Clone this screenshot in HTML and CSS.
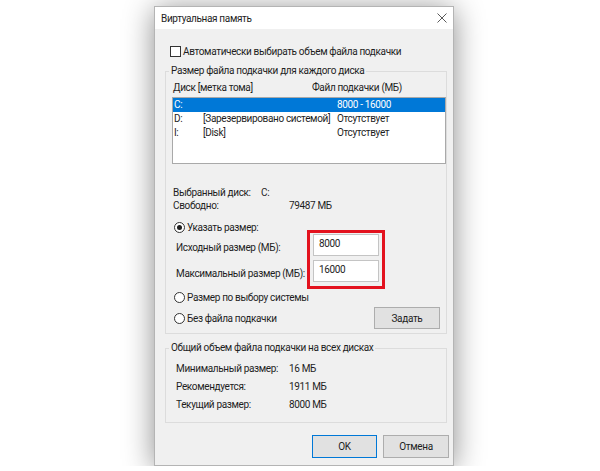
FILE: index.html
```html
<!DOCTYPE html>
<html lang="ru">
<head>
    <meta charset="UTF-8">
    <title>Виртуальная память</title>
    <link rel="stylesheet" href="styles.css">
</head>
<body>

<div class="dialog">
    <div class="titlebar">
        <span class="title">Виртуальная память</span>
        <svg class="close" width="10" height="10" viewBox="0 0 10 10">
            <path d="M0.5 0.5 L9.5 9.5 M9.5 0.5 L0.5 9.5" stroke="#5a5a5a" stroke-width="1" fill="none"/>
        </svg>
    </div>

    <div class="content">
        <div class="check-row">
            <span class="checkbox"></span>
            <span>Автоматически выбирать объем файла подкачки</span>
        </div>

        <fieldset class="group group-disks">
            <legend>Размер файла подкачки для каждого диска</legend>
            <div class="list-head">
                <span class="col-disk">Диск [метка тома]</span>
                <span>Файл подкачки (МБ)</span>
            </div>
            <div class="listbox">
                <div class="list-row selected">
                    <span class="c-letter">C:</span>
                    <span class="c-label"></span>
                    <span>8000 - 16000</span>
                </div>
                <div class="list-row">
                    <span class="c-letter">D:</span>
                    <span class="c-label">[Зарезервировано системой]</span>
                    <span>Отсутствует</span>
                </div>
                <div class="list-row">
                    <span class="c-letter">I:</span>
                    <span class="c-label">[Disk]</span>
                    <span>Отсутствует</span>
                </div>
            </div>

            <div class="info-row first">
                <span class="info-label narrow">Выбранный диск:</span>
                <span>C:</span>
            </div>
            <div class="info-row">
                <span class="info-label wide">Свободно:</span>
                <span>79487 МБ</span>
            </div>

            <div class="radio-row first-radio">
                <span class="radio checked"></span>
                <span>Указать размер:</span>
            </div>

            <div class="sizes">
                <div class="size-labels">
                    <div class="size-label">Исходный размер (МБ):</div>
                    <div class="size-label">Максимальный размер (МБ):</div>
                </div>
                <div class="size-inputs">
                    <div class="textbox">8000</div>
                    <div class="textbox">16000</div>
                    <div class="highlight"></div>
                </div>
            </div>

            <div class="radio-row second-radio">
                <span class="radio"></span>
                <span>Размер по выбору системы</span>
            </div>
            <div class="radio-row last-radio">
                <span class="radio"></span>
                <span class="radio-text">Без файла подкачки</span>
                <span class="btn btn-set">Задать</span>
            </div>
        </fieldset>

        <fieldset class="group group-total">
            <legend>Общий объем файла подкачки на всех дисках</legend>
            <div class="total-row">
                <span class="total-label">Минимальный размер:</span>
                <span>16 МБ</span>
            </div>
            <div class="total-row">
                <span class="total-label">Рекомендуется:</span>
                <span>1911 МБ</span>
            </div>
            <div class="total-row">
                <span class="total-label">Текущий размер:</span>
                <span>8000 МБ</span>
            </div>
        </fieldset>

        <div class="actions">
            <span class="btn btn-ok">OK</span>
            <span class="btn">Отмена</span>
        </div>
    </div>
</div>

</body>
</html>
```

FILE: styles.css
```css
/* Page and dialog frame */
body {
    margin: 0;
    background-color: #ffffff;
    font-family: Roboto, "Liberation Sans", sans-serif;
    font-size: 10px;
    letter-spacing: -0.35px;
    color: #1e1e1e;
    white-space: nowrap;
}

.dialog {
    width: 300px;
    margin: 6px 0 0 154px;
    box-sizing: border-box;
    border: 1px solid #b4b4b4;
    background-color: #f0f0f0;
    box-shadow: 0 3px 28px rgba(0, 0, 0, 0.45);
}

.titlebar {
    height: 22px;
    background-color: #ffffff;
    display: flex;
    align-items: center;
    justify-content: space-between;
    padding: 0 6px 0 6px;
}

.content {
    padding: 0 6px 7px 10px;
}

/* Checkbox at the top */
.check-row {
    display: flex;
    align-items: center;
    height: 14px;
    margin-top: 15px;
    padding-left: 5px;
}

.checkbox {
    flex-shrink: 0;
    width: 11px;
    height: 11px;
    box-sizing: border-box;
    border: 1px solid #333333;
    background-color: #ffffff;
    margin-right: 2px;
}

/* Group boxes */
.group {
    margin: 6px 0 0 0;
    padding: 0 0 4px 6px;
    border: 1px solid #dcdcdc;
    min-width: 0;
}

.group legend {
    padding: 0 2px;
    margin-left: -3px;
    line-height: 14px;
}

.group-total {
    margin-top: 7px;
    padding: 5px 0 8px 6px;
}

/* Disk list */
.list-head {
    display: flex;
    margin-top: 3px;
    height: 14px;
    line-height: 14px;
    padding-left: 1px;
}

.col-disk {
    flex-shrink: 0;
    width: 139px;
}

.listbox {
    margin-top: 2px;
    height: 67px;
    box-sizing: border-box;
    border: 1px solid #a9a9a9;
    background-color: #ffffff;
}

.list-row {
    display: flex;
    height: 14px;
    line-height: 14px;
    padding-left: 1px;
}

.list-row.selected {
    background-color: #0078d7;
    color: #ffffff;
}

.c-letter {
    flex-shrink: 0;
    width: 29px;
}

.c-label {
    flex-shrink: 0;
    width: 134px;
}

/* Selected disk info */
.info-row {
    display: flex;
    height: 13px;
    line-height: 13px;
    padding-left: 1px;
}

.info-row.first {
    margin-top: 22px;
}

.info-label {
    flex-shrink: 0;
}

.info-label.narrow {
    width: 88px;
}

.info-label.wide {
    width: 116px;
}

/* Radio buttons */
.radio-row {
    display: flex;
    align-items: center;
    height: 13px;
    padding-left: 2px;
}

.first-radio {
    margin-top: 9px;
}

.second-radio {
    margin-top: 9px;
}

.last-radio {
    margin-top: 3px;
    height: 22px;
}

.radio {
    flex-shrink: 0;
    width: 11px;
    height: 11px;
    box-sizing: border-box;
    border: 1px solid #333333;
    border-radius: 50%;
    background-color: #ffffff;
    margin-right: 2px;
    position: relative;
}

.radio.checked::after {
    content: "";
    position: absolute;
    left: 2px;
    top: 2px;
    width: 5px;
    height: 5px;
    border-radius: 50%;
    background-color: #1e1e1e;
}

.radio-text {
    flex-grow: 1;
}

/* Initial / maximum size */
.sizes {
    display: flex;
    padding-left: 4px;
}

.size-labels {
    flex-shrink: 0;
    width: 137px;
}

.size-label {
    height: 22px;
    line-height: 22px;
    padding-top: 3px;
    box-sizing: border-box;
}

.size-label + .size-label {
    margin-top: 4px;
}

.size-inputs {
    position: relative;
    width: 66px;
}

.textbox {
    height: 22px;
    box-sizing: border-box;
    border: 1px solid #c4c4c4;
    background-color: #ffffff;
    padding: 3px 0 0 5px;
}

.textbox + .textbox {
    margin-top: 4px;
}

/* red annotation frame drawn over the two inputs */
.highlight {
    position: absolute;
    top: -4px;
    left: -6px;
    right: -6px;
    bottom: -7px;
    border: 3px solid #e3121e;
}

/* Buttons */
.btn {
    flex-shrink: 0;
    display: flex;
    align-items: center;
    justify-content: center;
    width: 66px;
    height: 22px;
    box-sizing: border-box;
    border: 1px solid #adadad;
    background-color: #e1e1e1;
}

.btn-set {
    margin-right: 6px;
}

/* Totals */
.total-row {
    display: flex;
    height: 18px;
    line-height: 18px;
    padding-left: 4px;
}

.total-label {
    flex-shrink: 0;
    width: 113px;
}

.actions {
    display: flex;
    justify-content: flex-end;
    gap: 6px;
    margin: 12px -2px 0 0;
}

.actions .btn {
    height: 23px;
}

.btn-ok {
    width: 65px;
    border-color: #0078d7;
}
```
